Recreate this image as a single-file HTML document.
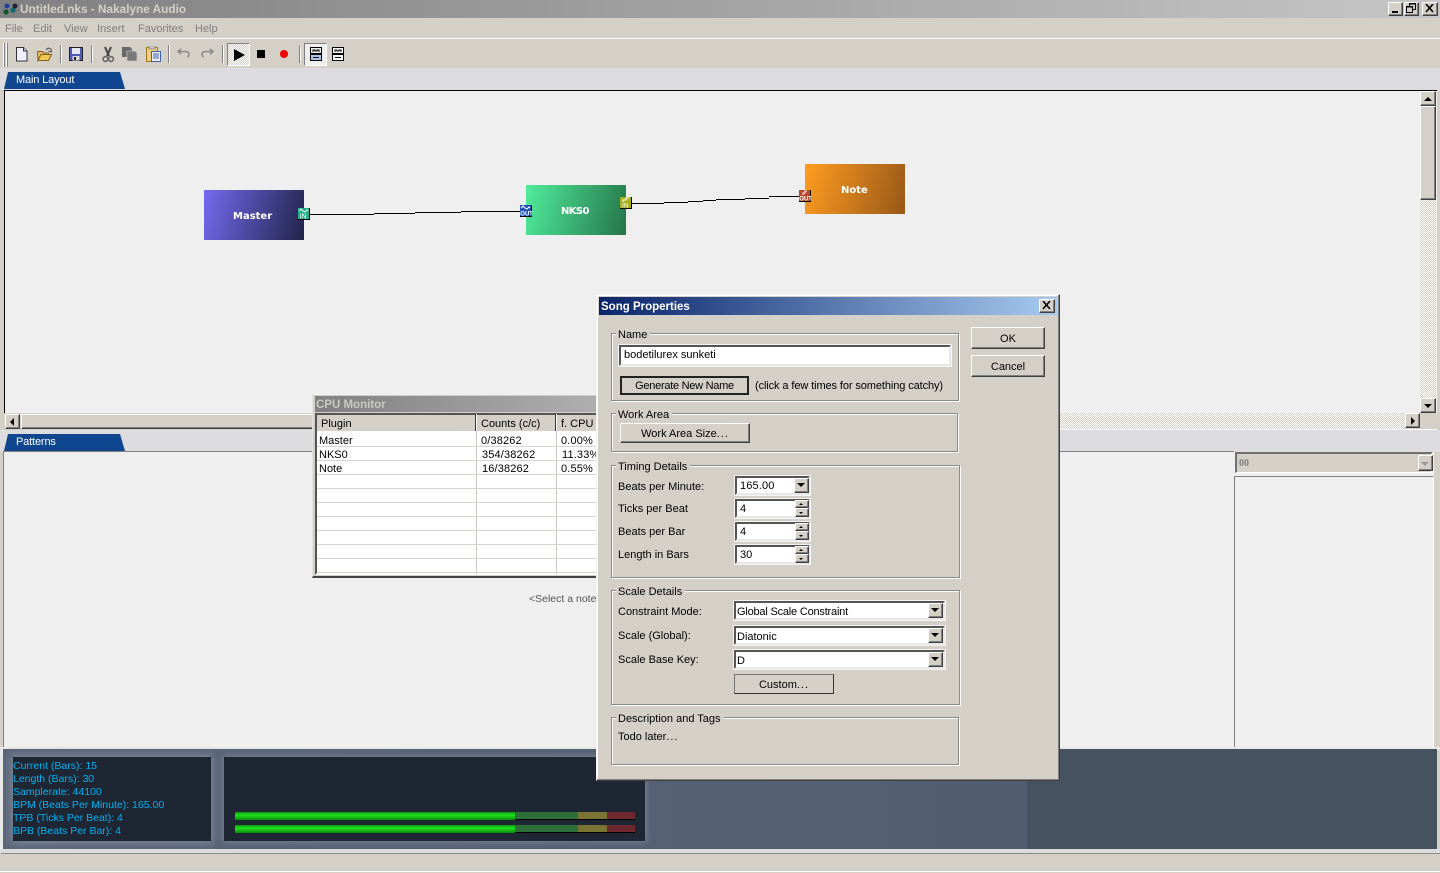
<!DOCTYPE html>
<html><head><meta charset="utf-8"><title>Untitled.nks - Nakalyne Audio</title>
<style>
html,body{margin:0;padding:0;width:1440px;height:873px;overflow:hidden;background:#d4d0c8}
body{position:relative;font:11px/16px "Liberation Sans",sans-serif;color:#000}
div,span.a,svg.a{position:absolute}
.t{white-space:nowrap}
.menu{top:22px;color:#808080;font-size:11px;line-height:14px}
.raised{background:#d4d0c8;box-sizing:border-box;border:1px solid;border-color:#fff #404040 #404040 #fff;box-shadow:inset -1px -1px 0 #808080}
.sunken{background:#fff;box-sizing:border-box;border:2px solid;border-color:#555 #e8e8e8 #e8e8e8 #555;outline:1px solid #f4f4f4;outline-offset:0}
.grp{box-sizing:border-box;border:1px solid #8a8a86;box-shadow:1px 1px 0 #fff,inset 1px 1px 0 #fff}
.leg{background:#d4d0c8;padding:0 3px 0 2px;white-space:nowrap;height:14px}
.lb{white-space:nowrap;left:618px}
.btn{text-align:center;white-space:nowrap}
.arrow{width:0;height:0;border-left:4px solid transparent;border-right:4px solid transparent;border-top:4px solid #000}
.tab{background:#10458f;color:#fff;clip-path:polygon(4px 0,116px 0,121px 100%,0 100%);padding-left:12px;box-sizing:border-box;white-space:nowrap;letter-spacing:-.15px}
.dith{background:repeating-conic-gradient(#d4d0c8 0 25%,#fff 0 50%) 0 0/2px 2px}
.row{left:317px;width:300px;height:1px;background:#d6d6d0}
.cell{white-space:nowrap}
.num{white-space:nowrap;letter-spacing:.15px}
.dots{letter-spacing:1px}
</style></head><body>

<!-- title bar -->
<div style="left:0;top:0;width:1440px;height:18px;background:linear-gradient(90deg,#808080,#c6c6c6)"></div>
<svg class="a" style="left:2px;top:2px" width="16" height="14" viewBox="0 0 16 14"><circle cx="4" cy="10" r="2.600" fill="#0a5a28"/><circle cx="11" cy="8" r="2.600" fill="#0a6a70"/><circle cx="13" cy="4" r="2.500" fill="#223"/><circle cx="5" cy="4" r="2.500" fill="#22409a"/></svg>
<div class="t" style="left:20px;top:2px;font:bold 11.800px/14px 'Liberation Sans',sans-serif;color:#d4d0c8">Untitled.nks - Nakalyne Audio</div>
<div class="raised" style="left:1388px;top:2px;width:15px;height:14px"><div style="left:3px;top:8px;width:6px;height:2px;background:#000"></div></div>
<div class="raised" style="left:1404px;top:2px;width:15px;height:14px"><svg class="a" style="left:1px;top:0" width="11" height="11"><path d="M3.500 3V.5h6v6H7M.5 3.500h6v6h-6z" fill="none" stroke="#000"/><path d="M3 1h7M0 4h7" stroke="#000"/></svg></div>
<div class="raised" style="left:1422px;top:2px;width:16px;height:14px"><svg class="a" style="left:2px;top:1px" width="10" height="9"><path d="M1 0l7 8M8 0L1 8" stroke="#000" stroke-width="1.600"/></svg></div>

<!-- menu -->
<div class="menu t" style="left:5px">File</div>
<div class="menu t" style="left:33px">Edit</div>
<div class="menu t" style="left:64px">View</div>
<div class="menu t" style="left:97px">Insert</div>
<div class="menu t" style="left:138px">Favorites</div>
<div class="menu t" style="left:195px">Help</div>
<div style="left:0;top:38px;width:1440px;height:1px;background:#fff"></div>
<div style="left:0;top:39px;width:1440px;height:29px;background:#d4d0c8"></div>

<!-- toolbar -->
<div style="left:3px;top:43px;width:1px;height:24px;background:#fff;box-shadow:1px 0 0 #808080,3px 0 0 #fff,4px 0 0 #808080"></div>
<div style="left:60px;top:45px;width:1px;height:18px;background:#808080;box-shadow:1px 0 0 #fff"></div>
<div style="left:91px;top:45px;width:1px;height:18px;background:#808080;box-shadow:1px 0 0 #fff"></div>
<div style="left:168px;top:45px;width:1px;height:18px;background:#808080;box-shadow:1px 0 0 #fff"></div>
<div style="left:222px;top:45px;width:1px;height:18px;background:#808080;box-shadow:1px 0 0 #fff"></div>
<div style="left:299px;top:45px;width:1px;height:18px;background:#808080;box-shadow:1px 0 0 #fff"></div>

<svg class="a" style="left:16px;top:47px" width="12" height="15"><path d="M.5.5h7l3.500 3.500v10H.5z" fill="#eef0ff" stroke="#333"/><path d="M7.500.5v3.500H11" fill="#ccd" stroke="#333"/></svg>
<svg class="a" style="left:37px;top:46px" width="17" height="16"><path d="M.5 5.500h5l1 1.500h5v2H4L1 14.500z" fill="#e8c060" stroke="#806020"/><path d="M1 14.500h10.500l3-6H4z" fill="#f0c850" stroke="#806020"/><path d="M9 4q2-3 5-1M14 3l.5 3-3-1" fill="none" stroke="#555"/></svg>
<svg class="a" style="left:69px;top:47px" width="14" height="14"><rect x=".5" y=".5" width="13" height="13" fill="#5058b8" stroke="#222"/><rect x="3" y="1" width="8" height="6" fill="#e8e8f4"/><rect x="3.500" y="9" width="7" height="4.500" fill="#d8d8d8"/><rect x="5" y="10" width="2" height="3" fill="#222"/></svg>
<svg class="a" style="left:102px;top:46px" width="13" height="17"><path d="M3 1l4 9M9 1L5 10" stroke="#444" stroke-width="2" fill="none"/><circle cx="3.500" cy="13" r="2.400" fill="none" stroke="#666" stroke-width="1.600"/><circle cx="9" cy="13" r="2.400" fill="none" stroke="#666" stroke-width="1.600"/></svg>
<svg class="a" style="left:122px;top:46px" width="16" height="16"><path d="M0 1h8l2 2v8H0z" fill="#6a6a6a"/><path d="M5 5h8l2 2v8H5z" fill="#7a7a7a" stroke="#d4d0c8" stroke-width=".6"/></svg>
<svg class="a" style="left:146px;top:46px" width="15" height="16"><rect x=".5" y="1.500" width="11" height="14" fill="#f0d080" stroke="#a07820"/><rect x="3" y="0" width="6" height="3" fill="#ccc" stroke="#666" stroke-width=".5"/><rect x="5.500" y="5.500" width="9" height="10" fill="#eef" stroke="#4060a0"/><path d="M7 8h6M7 10h6M7 12h6" stroke="#4060a0"/></svg>
<svg class="a" style="left:177px;top:48px" width="14" height="10"><path d="M4 1L1 3.500 4 6M1 3.500h7q4 0 4 3 0 1.500-1.500 2.500" fill="none" stroke="#8a8a8a" stroke-width="1.500"/></svg>
<svg class="a" style="left:200px;top:48px" width="14" height="10"><path d="M10 1l3 2.500L10 6M13 3.500H6q-4 0-4 3 0 1.500 1.500 2.500" fill="none" stroke="#8a8a8a" stroke-width="1.500"/></svg>

<div class="dith" style="left:227px;top:43px;width:23px;height:23px;box-sizing:border-box;border:1px solid;border-color:#808080 #fff #fff #808080"></div>
<svg class="a" style="left:234px;top:49px" width="11" height="12"><path d="M0 0l11 6-11 6z" fill="#000"/></svg>
<div style="left:257px;top:50px;width:8px;height:8px;background:#000"></div>
<svg class="a" style="left:279px;top:49px" width="10" height="10"><circle cx="5" cy="5" r="4" fill="#f00000"/></svg>
<div style="left:304px;top:43px;width:23px;height:23px;box-sizing:border-box;border:1px solid;border-color:#808080 #fff #fff #808080;background:#efefef"></div>
<svg class="a" style="left:310px;top:47px" width="12" height="14" shape-rendering="crispEdges"><rect x=".5" y=".5" width="11" height="13" fill="#a8c8e8" stroke="#000"/><rect x="1" y="1" width="10" height="5" fill="#eee"/><path d="M3 5V3h2v1h2V3h2v2" fill="none" stroke="#000"/><path d="M0 6.500h12M0 7.500h12M3 10.500h6" stroke="#000"/></svg>
<svg class="a" style="left:332px;top:47px" width="12" height="14" shape-rendering="crispEdges"><rect x=".5" y=".5" width="11" height="13" fill="#fff" stroke="#000"/><path d="M3 5V3h2v1h2V3h2v2" fill="none" stroke="#000"/><path d="M0 6.500h12M0 7.500h12M3 10.500h6" stroke="#000"/></svg>

<!-- tab strip 1 -->
<div style="left:0;top:68px;width:1440px;height:22px;background:#dcdcde"></div>
<div class="tab" style="left:4px;top:72px;width:121px;height:17px;line-height:15px;padding-top:1px">Main Layout</div>

<!-- main canvas -->
<div style="left:4px;top:90px;width:1433px;height:324px;background:#efefef;border-top:1px solid #000;border-left:1px solid #000;box-sizing:border-box"></div>

<!-- nodes -->
<div style="left:204px;top:190px;width:100px;height:50px;background:linear-gradient(105deg,#736bf0,#22244a)"></div>
<div class="t" style="left:233px;top:210px;font:bold 10px/14px 'DejaVu Sans',sans-serif;color:#fff">Master</div>
<div style="left:526px;top:185px;width:100px;height:50px;background:linear-gradient(105deg,#50ec9c,#257548)"></div>
<div class="t" style="left:561px;top:205px;font:bold 10px/14px 'DejaVu Sans',sans-serif;color:#fff;letter-spacing:-.6px">NKS0</div>
<div style="left:805px;top:164px;width:100px;height:50px;background:linear-gradient(105deg,#ff9c20,#985818)"></div>
<div class="t" style="left:841px;top:184px;font:bold 10px/14px 'DejaVu Sans',sans-serif;color:#fff">Note</div>

<svg class="a" style="left:0;top:0" width="1000" height="260" shape-rendering="crispEdges"><path d="M310 214.500H374M374 213.500H415M415 212.500H461M461 211.500H520M632 203.500H664M664 202.500H688M688 201.500H703M703 200.500H716M716 199.500H745M745 198.500H769M769 196.500H799" fill="none" stroke="#000"/></svg>

<svg class="a" style="left:298px;top:208px" width="12" height="12"><rect width="11" height="11" fill="#1eb088"/><path d="M11.500 0v11.500H0" fill="none" stroke="#000"/><path d="M1 3l2-2 2 2 2 1 2-2 1 1" fill="none" stroke="#fff"/><text x="1.500" y="10.500" font-family="Liberation Sans" font-size="7" fill="#fff">IN</text></svg>
<svg class="a" style="left:520px;top:205px" width="12" height="12"><rect width="11" height="11" fill="#2050b8"/><path d="M11.500 0v11.500H0" fill="none" stroke="#000"/><path d="M1 3l2-2 2 2 2 1 2-2 1 1" fill="none" stroke="#fff"/><text x=".3" y="10.500" font-family="Liberation Sans" font-size="6" font-weight="bold" fill="#fff">OUT</text></svg>
<svg class="a" style="left:620px;top:197px" width="12" height="12"><rect width="11" height="11" fill="#a8b020"/><path d="M11.500 0v11.500H0" fill="none" stroke="#000"/><path d="M3 5V3h3V1h3" fill="none" stroke="#fff"/><text x="2" y="10.500" font-family="Liberation Sans" font-size="6.500" fill="#fff">IN</text></svg>
<svg class="a" style="left:799px;top:190px" width="12" height="12"><rect width="11" height="11" fill="#b84828"/><path d="M11.500 0v11.500H0" fill="none" stroke="#000"/><path d="M4 5V3h2V1h2" fill="none" stroke="#fff"/><text x=".3" y="10.500" font-family="Liberation Sans" font-size="6" font-weight="bold" fill="#fff">OUT</text></svg>

<!-- vertical scrollbar -->
<div class="raised" style="left:1420px;top:91px;width:16px;height:15px"><div class="arrow" style="left:3px;top:5px;border-top:0;border-bottom:4px solid #000"></div></div>
<div class="raised" style="left:1420px;top:106px;width:16px;height:94px"></div>
<div class="dith" style="left:1420px;top:200px;width:16px;height:198px"></div>
<div class="raised" style="left:1420px;top:398px;width:16px;height:15px"><div class="arrow" style="left:3px;top:5px"></div></div>

<!-- horizontal scrollbar -->
<div style="left:4px;top:413px;width:1433px;height:16px;background:#d4d0c8"></div>
<div class="raised" style="left:5px;top:414px;width:15px;height:15px"><div class="arrow" style="left:4px;top:3px;border:4px solid transparent;border-left:0;border-right:4px solid #000"></div></div>
<div class="raised" style="left:21px;top:414px;width:300px;height:15px"></div>
<div class="dith" style="left:321px;top:413px;width:1084px;height:16px"></div>
<div class="raised" style="left:1405px;top:413px;width:15px;height:15px"><div class="arrow" style="left:5px;top:3px;border:4px solid transparent;border-right:0;border-left:4px solid #000"></div></div>
<div style="left:321px;top:429px;width:1116px;height:1px;background:#fff"></div>

<!-- patterns -->
<div style="left:0;top:430px;width:1440px;height:22px;background:#dcdcde"></div>
<div class="tab" style="left:4px;top:434px;width:121px;height:17px;line-height:15px;padding-top:1px">Patterns</div>
<div style="left:3px;top:451px;width:1231px;height:296px;background:#efefef;border-top:1px solid #808080;border-left:1px solid #808080;box-sizing:border-box"></div>
<div class="t" style="left:529px;top:592px;font-size:10.500px;line-height:14px;color:#555">&lt;Select a note</div>

<div style="left:1234px;top:452px;width:200px;height:295px;background:#efefef"></div>
<div style="left:1235px;top:452px;width:198px;height:21px;box-sizing:border-box;background:#d4d0c8;border:2px solid #707070;border-bottom:1px solid #fff;border-right-color:#fff"></div>
<div class="t" style="left:1239px;top:458px;font:bold 10px/12px 'Liberation Serif',serif;color:#808080">00</div>
<div class="raised" style="left:1418px;top:455px;width:15px;height:16px"><div class="arrow" style="left:2px;top:6px;border-top-color:#999"></div></div>
<div style="left:1234px;top:476px;width:200px;height:271px;box-sizing:border-box;background:#efefef;border:1px solid #808080;border-bottom:0;border-right-color:#fff"></div>

<!-- CPU monitor -->
<div style="left:312px;top:394px;width:300px;height:184px;box-sizing:border-box;background:#d4d0c8;border:1px solid;border-color:#efefef #333 #444 #e4e4e4;border-width:1px 1px 2px 1px"></div>
<div style="left:315px;top:396px;width:290px;height:16px;background:linear-gradient(90deg,#808080,#b0b0b0)"></div>
<div class="t" style="left:316px;top:398px;font:bold 11.500px/14px 'Liberation Sans',sans-serif;color:#c8c8c4">CPU Monitor</div>
<div style="left:315px;top:413px;width:290px;height:162px;background:#fff;border:2px solid;border-color:#555 #fff #fff #555;box-sizing:border-box"></div>
<div style="left:317px;top:415px;width:290px;height:16px;background:#d4d0c8"></div>
<div style="left:475px;top:414px;width:1px;height:17px;background:#333;box-shadow:1px 0 0 #fff"></div>
<div style="left:555px;top:414px;width:1px;height:17px;background:#333;box-shadow:1px 0 0 #fff"></div>
<div class="cell" style="left:321px;top:416px">Plugin</div>
<div class="cell" style="left:481px;top:416px">Counts (c/c)</div>
<div class="cell" style="left:561px;top:416px">f. CPU</div>
<div style="left:476px;top:431px;width:1px;height:143px;background:#c8c8c4"></div>
<div style="left:556px;top:431px;width:1px;height:143px;background:#c8c8c4"></div>
<div class="row" style="top:446px"></div><div class="row" style="top:460px"></div><div class="row" style="top:474px"></div><div class="row" style="top:488px"></div><div class="row" style="top:502px"></div><div class="row" style="top:516px"></div><div class="row" style="top:530px"></div><div class="row" style="top:544px"></div><div class="row" style="top:558px"></div><div class="row" style="top:572px"></div>
<div class="cell" style="left:319px;top:433px">Master</div>
<div class="num" style="left:481px;top:433px">0/38262</div>
<div class="num" style="left:561px;top:433px">0.00%</div>
<div class="cell" style="left:319px;top:447px">NKS0</div>
<div class="num" style="left:482px;top:447px">354/38262</div>
<div class="num" style="left:562px;top:447px">11.33%</div>
<div class="cell" style="left:319px;top:461px">Note</div>
<div class="num" style="left:482px;top:461px">16/38262</div>
<div class="num" style="left:561px;top:461px">0.55%</div>

<!-- bottom panel -->
<div style="left:0;top:747px;width:1440px;height:3px;background:#e8e8e8"></div>
<div style="left:3px;top:749px;width:1434px;height:100px;background:linear-gradient(90deg,#5a6678,#535f72 60%,#4a5667)"></div>
<div style="left:1027px;top:749px;width:410px;height:100px;background:#46525f"></div>
<div style="left:13px;top:757px;width:198px;height:84px;background:#1f2633;box-shadow:0 0 8px 2px #7f8899"></div>
<div style="left:224px;top:757px;width:421px;height:84px;background:#1f2633;box-shadow:0 0 6px 1px #7a8394"></div>
<div style="left:0;top:747px;width:3px;height:103px;background:#e8e8e8"></div>
<div class="t" style="left:13px;top:760px;font:10.500px/13px 'Liberation Sans',sans-serif;color:#00b0f0">Current (Bars): 15<br>Length (Bars): 30<br>Samplerate: 44100<br>BPM (Beats Per Minute): 165.00<br>TPB (Ticks Per Beat): 4<br>BPB (Beats Per Bar): 4</div>

<div style="left:235px;top:812px;width:400px;height:8px;background:#000"></div>
<div style="left:235px;top:812px;width:280px;height:8px;background:linear-gradient(#0c9a0c,#20e020 40%,#0a8a0a)"></div>
<div style="left:515px;top:812px;width:63px;height:7px;background:#2e6e38"></div>
<div style="left:578px;top:812px;width:29px;height:7px;background:#7a7434"></div>
<div style="left:607px;top:812px;width:28px;height:7px;background:#6e2830"></div>
<div style="left:235px;top:825px;width:400px;height:8px;background:#000"></div>
<div style="left:235px;top:825px;width:280px;height:8px;background:linear-gradient(#0c9a0c,#20e020 40%,#0a8a0a)"></div>
<div style="left:515px;top:825px;width:63px;height:7px;background:#2e6e38"></div>
<div style="left:578px;top:825px;width:29px;height:7px;background:#7a7434"></div>
<div style="left:607px;top:825px;width:28px;height:7px;background:#6e2830"></div>

<!-- status bar -->
<div style="left:0;top:849px;width:1440px;height:24px;background:#d4d0c8"></div>
<div style="left:0;top:849px;width:1440px;height:4px;background:#dcdcdc"></div>
<div style="left:1px;top:853px;width:1439px;height:1px;background:#8a8a84"></div>
<div style="left:0;top:871px;width:1440px;height:1px;background:#fff"></div>

<!-- dialog -->
<div style="left:596px;top:294px;width:464px;height:487px;box-sizing:border-box;background:#d4d0c8;border:1px solid;border-color:#f4f4f4 #404040 #404040 #f4f4f4;box-shadow:inset -1px -1px 0 #808080,inset 1px 1px 0 #fff"></div>
<div style="left:599px;top:297px;width:458px;height:18px;background:linear-gradient(90deg,#0a246a,#a6caf0)"></div>
<div class="t" style="left:601px;top:300px;font:bold 11.500px/14px 'Liberation Sans',sans-serif;color:#fff">Song Properties</div>
<div class="raised" style="left:1039px;top:299px;width:16px;height:14px"><svg class="a" style="left:2px;top:1px" width="10" height="9"><path d="M1 0l7 8M8 0L1 8" stroke="#000" stroke-width="1.600"/></svg></div>

<!-- Name -->
<div class="grp" style="left:611px;top:333px;width:348px;height:68px"></div>
<div class="leg" style="left:616px;top:327px">Name</div>
<div class="sunken" style="left:619px;top:345px;width:332px;height:21px"></div>
<div class="t" style="left:624px;top:347px">bodetilurex sunketi</div>
<div class="btn" style="left:620px;top:376px;width:129px;height:19px;box-sizing:border-box;background:#d4d0c8;border:2px solid #222;line-height:16px;letter-spacing:-.27px">Generate New Name</div>
<div class="t" style="left:755px;top:378px;letter-spacing:-.1px">(click a few times for something catchy)</div>

<!-- Work Area -->
<div class="grp" style="left:611px;top:413px;width:347px;height:39px"></div>
<div class="leg" style="left:616px;top:407px">Work Area</div>
<div class="raised btn" style="left:620px;top:423px;width:130px;height:20px;line-height:20px">Work Area Size<span class="dots">...</span></div>

<!-- Timing -->
<div class="grp" style="left:611px;top:465px;width:349px;height:113px"></div>
<div class="leg" style="left:616px;top:459px">Timing Details</div>
<div class="lb" style="top:479px">Beats per Minute:</div>
<div class="lb" style="top:501px">Ticks per Beat</div>
<div class="lb" style="top:524px">Beats per Bar</div>
<div class="lb" style="top:547px">Length in Bars</div>

<div class="sunken" style="left:735px;top:476px;width:75px;height:19px"></div>
<div class="num" style="left:740px;top:478px">165.00</div>
<div class="raised" style="left:794px;top:478px;width:15px;height:15px"><div class="arrow" style="left:2px;top:4px"></div></div>

<div class="sunken" style="left:735px;top:499px;width:75px;height:19px"></div><div class="t" style="left:740px;top:501px">4</div>
<div class="sunken" style="left:735px;top:522px;width:75px;height:19px"></div><div class="t" style="left:740px;top:524px">4</div>
<div class="sunken" style="left:735px;top:545px;width:75px;height:19px"></div><div class="t" style="left:740px;top:547px">30</div>

<div class="raised" style="left:795px;top:500px;width:14px;height:8px"><div class="arrow" style="left:3px;top:2px;border-width:0 2px 2px;border-style:solid;border-color:transparent transparent #000"></div></div>
<div class="raised" style="left:795px;top:508px;width:14px;height:9px"><div class="arrow" style="left:3px;top:3px;border-width:2px 2px 0"></div></div>
<div class="raised" style="left:795px;top:523px;width:14px;height:8px"><div class="arrow" style="left:3px;top:2px;border-width:0 2px 2px;border-style:solid;border-color:transparent transparent #000"></div></div>
<div class="raised" style="left:795px;top:531px;width:14px;height:9px"><div class="arrow" style="left:3px;top:3px;border-width:2px 2px 0"></div></div>
<div class="raised" style="left:795px;top:546px;width:14px;height:8px"><div class="arrow" style="left:3px;top:2px;border-width:0 2px 2px;border-style:solid;border-color:transparent transparent #000"></div></div>
<div class="raised" style="left:795px;top:554px;width:14px;height:9px"><div class="arrow" style="left:3px;top:3px;border-width:2px 2px 0"></div></div>

<!-- Scale -->
<div class="grp" style="left:611px;top:590px;width:349px;height:115px"></div>
<div class="leg" style="left:616px;top:584px">Scale Details</div>
<div class="lb" style="top:604px">Constraint Mode:</div>
<div class="lb" style="top:628px">Scale (Global):</div>
<div class="lb" style="top:652px">Scale Base Key:</div>

<div class="sunken" style="left:734px;top:601px;width:211px;height:19px"></div><div class="t" style="left:737px;top:604px;letter-spacing:-.2px">Global Scale Constraint</div>
<div class="raised" style="left:928px;top:603px;width:15px;height:15px"><div class="arrow" style="left:2px;top:4px"></div></div>
<div class="sunken" style="left:734px;top:626px;width:211px;height:19px"></div><div class="t" style="left:737px;top:629px">Diatonic</div>
<div class="raised" style="left:928px;top:628px;width:15px;height:15px"><div class="arrow" style="left:2px;top:4px"></div></div>
<div class="sunken" style="left:734px;top:650px;width:211px;height:19px"></div><div class="t" style="left:737px;top:653px">D</div>
<div class="raised" style="left:928px;top:652px;width:15px;height:15px"><div class="arrow" style="left:2px;top:4px"></div></div>

<div class="btn" style="left:734px;top:674px;width:100px;height:20px;box-sizing:border-box;background:#d4d0c8;border:1px solid;border-color:#777 #333 #333 #777;line-height:20px">Custom<span class="dots">...</span></div>

<!-- Description -->
<div class="grp" style="left:611px;top:717px;width:348px;height:48px"></div>
<div class="leg" style="left:616px;top:711px">Description and Tags</div>
<div class="lb" style="top:729px">Todo later<span class="dots">...</span></div>

<!-- OK Cancel -->
<div class="raised btn" style="left:971px;top:327px;width:74px;height:22px;line-height:22px">OK</div>
<div class="raised btn" style="left:971px;top:355px;width:74px;height:22px;line-height:22px">Cancel</div>

</body></html>
